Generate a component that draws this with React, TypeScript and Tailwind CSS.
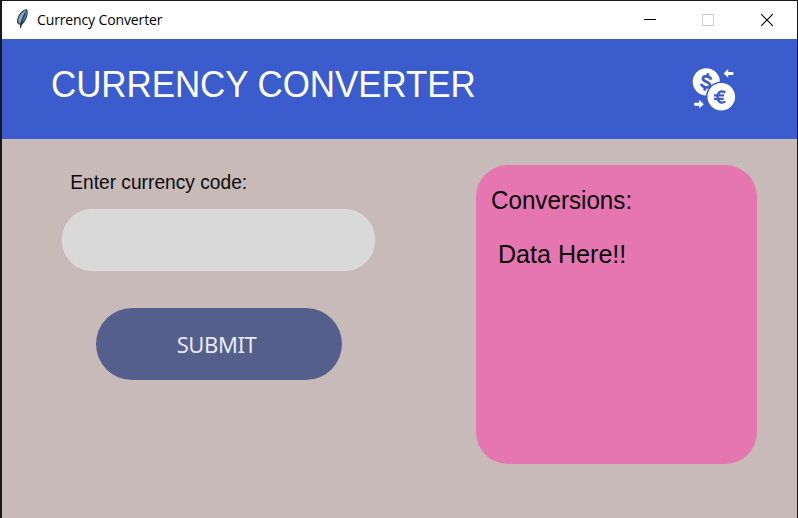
function FeatherIcon() {
  return (
    <svg className="mt-[7px] ml-[13px] h-[21px] w-[14px] shrink-0" viewBox="0 0 14 21">
      <path d="M11.5 1 C13.2 2.2 13.2 6 11.8 9.4 C10.6 12.7 8.8 15.2 6.8 17 L5.8 20 L5 19.7 L5.2 16.8 C1.8 16.2 1.3 13.5 2.6 10 C4.2 5.4 7.6 1.7 11.5 1Z" fill="#34414f" />
      <path d="M11.2 2 C7 3.7 4.2 7.8 3.3 12 C3 14 3.6 15 5 15.7 C7 11 8.5 6 11.2 2Z" fill="#8fa8c0" />
      <path d="M11.6 2.4 C12.5 5.5 11.2 9.5 9.2 12.3 L6.4 15 C6.6 10.5 8.3 6.5 11.6 2.4Z" fill="#4078b6" />
      <path d="M10.2 5.5 C8 9 6.3 14 5.4 19.8" stroke="#142330" strokeWidth=".8" fill="none" />
    </svg>
  );
}

function ExchangeIcon() {
  return (
    <svg className="h-[46px] w-[44px]" viewBox="692 67 44 46">
      <circle cx="706.3" cy="81.8" r="13.6" fill="#fff" />
      <g transform="rotate(12 706.3 81.8)" fill="none" stroke="#3b5ccc" strokeWidth="2.7">
        <path d="M710.6 78.6 C708.9 75.6 702.2 75.7 702.2 79 C702.2 82.8 710.6 80.6 710.6 84.6 C710.6 88.2 703.4 88 701.7 84.9" />
        <path d="M706.3 73V77M706.3 87V90.8" />
      </g>
      <circle cx="721.3" cy="96.8" r="15.4" fill="#3b5ccc" />
      <circle cx="721.3" cy="96.8" r="13.8" fill="#fff" />
      <path d="M725.4 92.6 C720.9 89.6 717.6 92.5 717.6 97 C717.6 101.5 720.9 104.4 725.4 101.4 M714 95.4H724 M714 98.8H723.6" fill="none" stroke="#3b5ccc" strokeWidth="2.3" />
      <path d="M723.6 73.4 L728.2 69 V71.9 H733.4 V74.9 H728.2 V77.8Z" fill="#fff" />
      <path d="M703.8 104.2 L699.2 99.8 V102.7 H694.2 V105.7 H699.2 V108.6Z" fill="#fff" />
    </svg>
  );
}

function TitleBar() {
  return (
    <div className="flex h-[38px] items-start bg-white">
      <FeatherIcon />
      <span className="mt-[8px] ml-[8px] origin-left scale-x-[0.935] font-['Open_Sans','Noto_Sans',sans-serif] text-[15px] leading-[20px] tracking-[-0.15px] whitespace-nowrap text-black">
        Currency Converter
      </span>
      <div className="mr-[24px] ml-auto flex gap-[46px] pt-[13px]">
        <svg className="h-[12px] w-[12px]" viewBox="0 0 12 12" shapeRendering="crispEdges">
          <path d="M0 5.5H12" stroke="#000" />
        </svg>
        <svg className="h-[12px] w-[12px]" viewBox="0 0 12 12" shapeRendering="crispEdges">
          <rect x=".5" y=".5" width="11" height="11" fill="none" stroke="#ccc" />
        </svg>
        <svg className="ml-[1px] h-[12px] w-[12px]" viewBox="0 0 12 12">
          <path d="M.2 .2L11.8 11.8M11.8 .2L.2 11.8" stroke="#000" strokeWidth="1.1" />
        </svg>
      </div>
    </div>
  );
}

export default function App() {
  return (
    <div className="h-[518px] w-[798px] overflow-hidden border-t border-r border-l-2 border-[#18191d] bg-[#c8bab8] font-['Liberation_Sans',Arial,sans-serif]">
      <TitleBar />
      <header className="flex h-[100px] items-start justify-between bg-[#3b5ccc] pr-[61px] pl-[49px]">
        <h1 className="mt-[26px] origin-left scale-x-[0.97] text-[36px] leading-[40px] tracking-[-0.05px] whitespace-nowrap text-white">CURRENCY CONVERTER</h1>
        <div className="mt-[28px]"><ExchangeIcon /></div>
      </header>
      <main className="flex items-start pt-[26px] pl-[60px]">
        <section className="w-[313px]">
          <label htmlFor="code" className="block origin-left scale-x-[0.913] pt-[5px] pl-[9px] text-[21px] leading-[24px] whitespace-nowrap text-[#0c0c0c]">
            Enter currency code:
          </label>
          <input id="code" className="mt-[15px] block h-[62px] w-[313px] rounded-[30px] border border-[#e0dfdf] bg-[#d9d9d9] px-6 outline-none" />
          <button className="mt-[37px] ml-[34px] flex h-[72px] w-[246px] items-center justify-center rounded-[36px] bg-[#545f8b] pr-[5px] font-['Noto_Sans',sans-serif] text-[22px] tracking-[-0.4px] text-[#e7eaf4]">
            SUBMIT
          </button>
        </section>
        <section className="ml-[101px] h-[299px] w-[281px] rounded-[32px] bg-[#e576b0] pt-[21px] pl-[15px] text-[26px] leading-[28px] text-[#080808]">
          <h2 className="origin-left scale-x-[0.93]">Conversions:</h2>
          <p className="mt-[26px] ml-[7px] origin-left scale-x-[0.965]">Data Here!!</p>
        </section>
      </main>
    </div>
  );
}
